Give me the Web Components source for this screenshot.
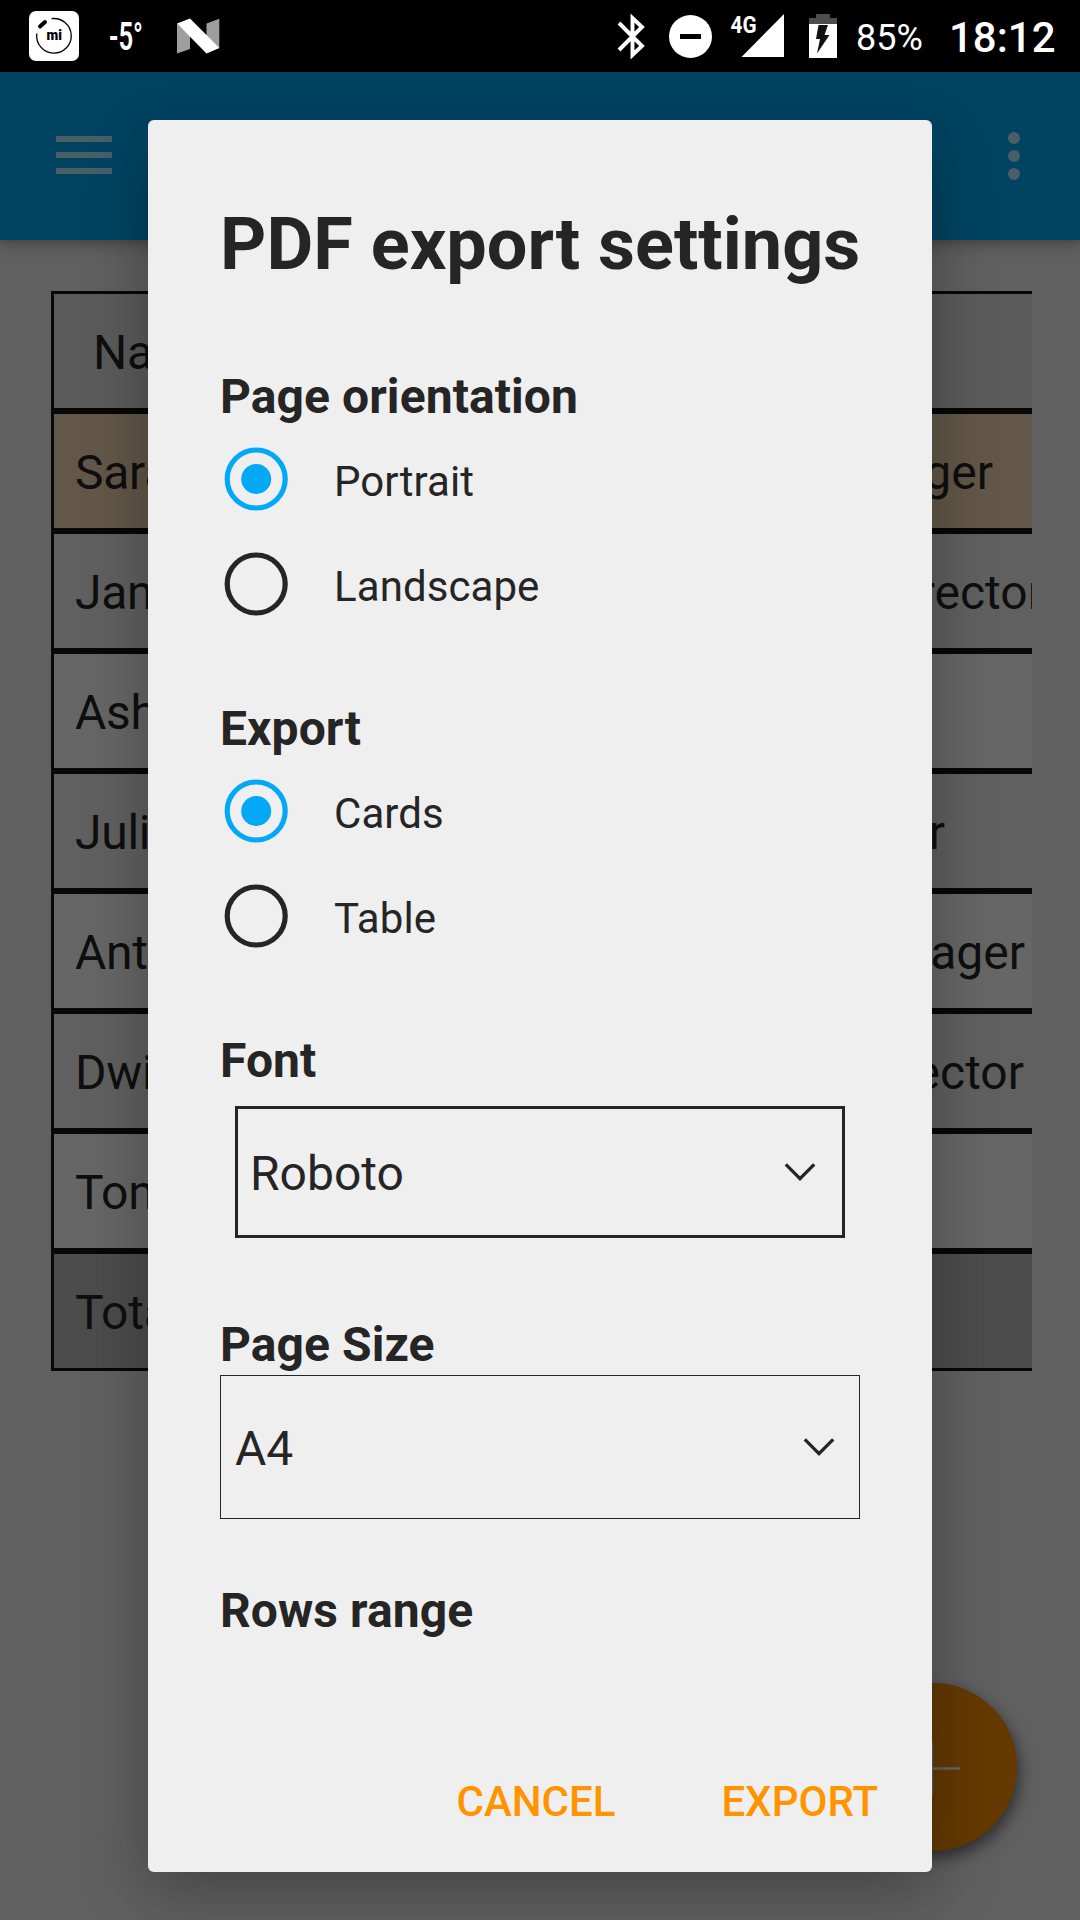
<!DOCTYPE html>
<html lang="en">
<head>
<meta charset="utf-8">
<title>PDF export settings</title>
<style>
html,body{margin:0;padding:0;background:#606060}
body{width:1080px;height:1920px;overflow:hidden;font-family:Roboto,"Noto Sans",sans-serif}
</style>
</head>
<body>
<app-screen>
  <status-bar slot="status"></status-bar>
  <app-bar slot="bar"></app-bar>
  <data-table slot="content">
    <data-row kind="head"><span slot="a">Na</span></data-row>
    <data-row kind="selected" end="39"><span slot="a">Sara</span><span slot="b">ger</span></data-row>
    <data-row end="-12"><span slot="a">Jan</span><span slot="b">rector</span></data-row>
    <data-row kind="alt"><span slot="a">Ash</span></data-row>
    <data-row end="87"><span slot="a">Juli</span><span slot="b">r</span></data-row>
    <data-row kind="alt" end="7"><span slot="a">Ant</span><span slot="b">ager</span></data-row>
    <data-row end="8"><span slot="a">Dwi</span><span slot="b">ector</span></data-row>
    <data-row kind="alt"><span slot="a">Ton</span></data-row>
    <data-row kind="total"><span slot="a">Tota</span></data-row>
  </data-table>
  <fab-button slot="over"></fab-button>
  <settings-dialog slot="over">
    <span slot="title">PDF export settings</span>
    <form-section label="Page orientation">
      <radio-option checked>Portrait</radio-option>
      <radio-option>Landscape</radio-option>
    </form-section>
    <form-section label="Export">
      <radio-option checked>Cards</radio-option>
      <radio-option>Table</radio-option>
    </form-section>
    <form-section label="Font"><select-box kind="inset">Roboto</select-box></form-section>
    <form-section label="Page Size"><select-box>A4</select-box></form-section>
    <form-section label="Rows range"></form-section>
    <text-button slot="actions">CANCEL</text-button>
    <text-button slot="actions">EXPORT</text-button>
  </settings-dialog>
</app-screen>
<script>
const define = (name, html, setup) => customElements.define(name, class extends HTMLElement {
  constructor() {
    super();
    this.attachShadow({ mode: 'open' }).innerHTML = html;
  }
  connectedCallback() { if (setup) setup(this, this.shadowRoot); }
});

define('app-screen', `
<style>
:host{display:flex;flex-direction:column;position:relative;width:1080px;height:1920px;overflow:hidden;
 background:#606060}
main{padding:51px 48px 0 51px}
</style>
<slot name="status"></slot><slot name="bar"></slot>
<main><slot name="content"></slot></main>
<slot name="over"></slot>`);

define('status-bar', `
<style>
:host{display:flex;height:72px;background:#000;color:#fff;justify-content:space-between;position:relative;z-index:3;flex:none}
svg{display:block}
.right{display:flex}
.pct{font-size:36px;line-height:72px;margin:2px 0 0 15px;width:93px}
.time{font-size:42px;font-weight:500;line-height:72px;margin-top:2px;width:131px}
</style>
<svg width="240" height="72" viewBox="0 0 240 72">
  <rect x="29" y="11" width="50" height="50" rx="7" fill="#fff"/>
  <path d="M51.5 18.7A17.3 17.3 0 1 1 36.8 33.5" fill="none" stroke="#000" stroke-width="1.3"/>
  <path d="M40 26.5L45 22" stroke="#000" stroke-width="4" stroke-linecap="round"/>
  <text x="46.500" y="40" font-family="Roboto" font-weight="900" font-size="14" textLength="15.500" lengthAdjust="spacingAndGlyphs" fill="#000">mi</text>
  <text x="109" y="50" font-family="Roboto" font-weight="600" font-size="39" textLength="34" lengthAdjust="spacingAndGlyphs" fill="#fff">-5°</text>
  <path d="M177 23.5L190 36V49L177 53.5zM206.500 23.500L219.300 18.700V48L206.500 36z" fill="#9e9e9e"/>
  <path d="M177 23.500L190 18.500L219.500 48L206.500 53.500z" fill="#fff"/>
</svg>
<div class="right">
<svg width="229" height="72" viewBox="612 0 229 72">
  <path d="M619 23L642 46L632.500 55V18L642 27L619 50" fill="none" stroke="#fff" stroke-width="3.900"/>
  <circle cx="690.500" cy="36.500" r="21.500" fill="#fff"/><path d="M680 36.500H701" stroke="#000" stroke-width="5"/>
  <text x="730.500" y="33" font-family="Roboto" font-weight="700" font-size="24" textLength="26" lengthAdjust="spacingAndGlyphs" fill="#fff">4G</text>
  <path d="M784 14V57H741.500z" fill="#fff"/>
  <path d="M816 14H830V18H837V24H809V18H816z" fill="#4d4d4d"/>
  <path d="M809 24H837V58H809z" fill="#fff"/>
  <path d="M818.500 25H828L824.500 35H829.500L817 53.500L820 39H816z" fill="#111"/>
</svg>
<span class="pct">85%</span><span class="time">18:12</span>
</div>`);

define('app-bar', `
<style>
:host{display:flex;flex:none;height:168px;box-sizing:border-box;background:#014462;justify-content:space-between;
 padding:64px 60px 0 56px;box-shadow:0 5px 14px rgba(0,0,0,.26),0 0 4px rgba(0,0,0,.16)}
svg{display:block}
</style>
<svg width="56" height="38"><path d="M0 0H56V6H0zM0 16H56V22H0zM0 32H56V38H0z" fill="#4a5e68"/></svg>
<svg width="12" height="48" viewBox="0 0 12 48" style="margin-top:-4px"><g fill="#4a5e68"><circle cx="6" cy="6" r="6"/><circle cx="6" cy="24" r="6"/><circle cx="6" cy="42" r="6"/></g></svg>`);

define('data-table', `
<style>
:host{display:flex;flex-direction:column;gap:6px;background:#080808;padding:3px 0 3px 3px;width:978px}
</style><slot></slot>`);

define('data-row', `
<style>
:host{display:flex;justify-content:space-between;height:114px;box-sizing:border-box;padding:0 0 0 21px;overflow:hidden;
 background:#606060;color:#0f0f0f;font-size:48px;line-height:117px}
:host([kind=head]){background:#5b5b5b;padding-left:39px}
:host([kind=selected]){background:#625748}
:host([kind=alt]){background:#666}
:host([kind=total]){background:#4c4c4c}
.a{letter-spacing:-.25px}
.b{margin-right:var(--end,0)}
</style><div class="a"><slot name="a"></slot></div><div class="b"><slot name="b"></slot></div>`,
(el) => { if (el.hasAttribute('end')) el.style.setProperty('--end', el.getAttribute('end') + 'px'); });

define('fab-button', `
<style>
:host{position:absolute;left:849px;top:1683px;width:168px;height:168px;border-radius:50%;background:#653900;
 box-shadow:3px 7px 15px rgba(0,0,0,.5)}
svg{display:block}
</style>
<svg width="168" height="168"><path d="M56 85.500H111" stroke="#656565" stroke-width="2.600"/><path d="M83.200 58V113" stroke="#555f66" stroke-width="1.600"/></svg>`);

define('settings-dialog', `
<style>
:host{position:absolute;left:148px;top:120px;width:784px;height:1752px;box-sizing:border-box;display:flex;flex-direction:column;
 padding:83px 54px 46px 72px;background:#efefef;border-radius:6px;color:#252525;
 box-shadow:0 26px 70px rgba(0,0,0,.18),0 10px 50px rgba(0,0,0,.13)}
h1{margin:0 0 82px;font-size:72px;line-height:84px;font-weight:700;white-space:nowrap;letter-spacing:.03px}
.body{display:flex;flex-direction:column;gap:64px;width:640px}
.body ::slotted([label="Page Size"]){margin-top:15px}
footer{margin-top:auto;display:flex;justify-content:flex-end;gap:106px}
</style>
<h1><slot name="title"></slot></h1>
<div class="body"><slot></slot></div>
<footer><slot name="actions"></slot></footer>`);

define('form-section', `
<style>
:host{display:flex;flex-direction:column}
h2{margin:0;font-size:48px;line-height:56px;font-weight:700;letter-spacing:.08px}
.fields{display:flex;flex-direction:column;margin-top:2px}
</style>
<h2></h2><div class="fields"><slot></slot></div>`,
(el, root) => { root.querySelector('h2').textContent = el.getAttribute('label'); });

define('radio-option', `
<style>
:host{display:flex;height:105px;box-sizing:border-box;padding:20px 0 0 4px;gap:46px;font-size:42px;line-height:64px}
svg{display:block;flex:none;color:#252525}
circle{fill:none;stroke:currentColor;stroke-width:5.200}
.dot{display:none;fill:currentColor;stroke:none}
:host([checked]) svg{color:#03a9f6}
:host([checked]) .dot{display:block}
span{margin-top:3px;letter-spacing:.08px}
</style>
<svg width="64" height="64"><circle cx="32.200" cy="32" r="29"/><circle class="dot" cx="32.200" cy="32" r="15"/></svg>
<span><slot></slot></span>`);

define('select-box', `
<style>
:host{display:flex;justify-content:space-between;align-items:center;box-sizing:border-box;height:144px;border:1px solid #252525;
 padding:3px 24px 0 14px;font-size:48px;line-height:56px}
:host([kind=inset]){height:132px;border-width:3px;margin:15px 15px 0;padding:3px 26px 0 12px}
svg{display:block;margin-top:-4px}
</style>
<span><slot></slot></span>
<svg width="32" height="20"><path d="M1.800 2.300L16 16.700L30.200 2.300" fill="none" stroke="#252525" stroke-width="3.300"/></svg>`);

define('text-button', `
<style>:host{display:block;font-size:42px;line-height:48px;font-weight:500;color:#ff9400}</style><slot></slot>`);
</script>
</body>
</html>
